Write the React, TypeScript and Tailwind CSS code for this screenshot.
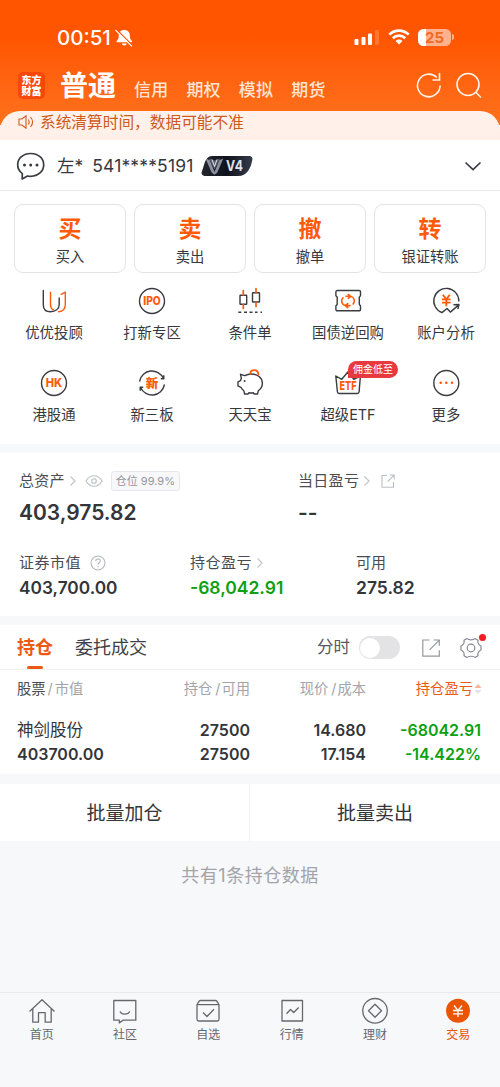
import type { ReactNode } from "react";
import clsx from "clsx";

const DARK = "#3a3c42";
const ORANGE = "#ff5a0a";

interface Shortcut {
  label: string;
  icon: ReactNode;
  badge?: string;
}

function Glyph({ children }: { children: ReactNode }) {
  return (
    <svg
      viewBox="0 0 28 28"
      className="h-7 w-7 shrink-0"
      fill="none"
      stroke={DARK}
      strokeWidth="1.4"
      strokeLinecap="round"
      strokeLinejoin="round"
    >
      {children}
    </svg>
  );
}

function GlyphText({ children, size, width, y }: { children: string; size: number; width: number; y: number }) {
  return (
    <text
      x="14"
      y={y}
      textAnchor="middle"
      textLength={width}
      lengthAdjust="spacingAndGlyphs"
      fontSize={size}
      fontWeight="800"
      fill={ORANGE}
      stroke="none"
    >
      {children}
    </text>
  );
}

const trades = [
  { mark: "买", label: "买入" },
  { mark: "卖", label: "卖出" },
  { mark: "撤", label: "撤单" },
  { mark: "转", label: "银证转账" },
];

const shortcuts: Shortcut[] = [
  {
    label: "优优投顾",
    icon: (
      <Glyph>
        <path d="M3.300 3.500v14.500c0 4.200 2.400 6.700 7.200 6.700 5 0 8.700-2.700 8.700-7.200V11" />
        <path d="M10.500 5.300v12.500c0 2.400 1 4.200 3 5.200M21.300 7.300l4-2.300v12.500c0 4.300-2.600 6.900-6.700 7.200" stroke={ORANGE} />
      </Glyph>
    ),
  },
  {
    label: "打新专区",
    icon: (
      <Glyph>
        <circle cx="14" cy="14" r="12.500" />
        <GlyphText size={11.5} width={17.5} y={18.2}>IPO</GlyphText>
      </Glyph>
    ),
  },
  {
    label: "条件单",
    icon: (
      <Glyph>
        <rect x="4" y="8.200" width="6.700" height="9" rx="0.500" />
        <rect x="16.500" y="5.800" width="7" height="9.200" rx="0.500" />
        <path d="M7.300 3.500v4.500M7.300 17.500v4M20 1.700v3.800M20 15.500v4" stroke={ORANGE} strokeWidth="1.700" />
        <path d="M2.300 25.200h3M8 25.200h3M13.500 25.200h3M19 25.200h2.500M24.500 25.200h1.500" strokeLinecap="butt" />
      </Glyph>
    ),
  },
  {
    label: "国债逆回购",
    icon: (
      <Glyph>
        <path d="M3.200 3.500h22a1.300 1.300 0 0 1 1.300 1.300v4l-1.200 1.300v7.400l1.200 1.300v3.700a1.300 1.300 0 0 1-1.300 1.300h-22a1.300 1.300 0 0 1-1.300-1.300v-3.700l1.300-1.300v-7.400L1.900 8.800v-4a1.300 1.300 0 0 1 1.300-1.300Z" />
        <path
          d="M12 9.300h3.500c3 0 4.800 2.300 4.800 4.400 0 1.400-.4 2.400-1.200 3.300M16 18.600h-3.500c-3 0-4.800-2.200-4.800-4.500 0-1.400.5-2.500 1.300-3.300M14.200 7.300l2.500 2-2.500 2M13.800 16.600l-2.500 2 2.500 2"
          stroke={ORANGE}
          strokeWidth="1.600"
        />
      </Glyph>
    ),
  },
  {
    label: "账户分析",
    icon: (
      <Glyph>
        <path d="M26.800 14A12.500 12.500 0 1 0 10 25.600l5-4.100 3.400 3.600 8.300-7.200M22 17.700l5-.2-1 4" />
        <path d="m10.800 7.700 3.500 4.500 3.500-4.500M10 12.300h8.600M10 15.600h8.600M14.300 12.300v7" stroke={ORANGE} strokeWidth="1.800" strokeLinecap="butt" />
      </Glyph>
    ),
  },
  {
    label: "港股通",
    icon: (
      <Glyph>
        <circle cx="14" cy="14" r="12.500" />
        <GlyphText size={12} width={16.5} y={18.3}>HK</GlyphText>
      </Glyph>
    ),
  },
  {
    label: "新三板",
    icon: (
      <Glyph>
        <path d="M1.700 12A12.500 12.500 0 0 1 25.300 9.200M26.300 16A12.500 12.500 0 0 1 2.700 18.800M25.800 6.800v3h-2.500M2.200 21.200v-3h2.500" />
        <GlyphText size={12.5} width={12.5} y={18.6}>新</GlyphText>
      </Glyph>
    ),
  },
  {
    label: "天天宝",
    icon: (
      <Glyph>
        <path d="M4.500 5.300l4.300 1.400C10.500 5.700 12.700 5 15.300 5c6 0 11.100 3.700 11.100 9.300 0 3.300-1.700 5.700-4.100 7.500l-.8 3.200h-3.300l-1-1.300c-1.400.3-2.900.3-4.200.1L12 25H8.600l-.8-3.300c-1.200-.9-2.200-2-2.900-3.400L2 16.800v-4l2.500-1.200c.2-.8.500-1.500.9-2.200Z" />
        <path d="M14.200 4.800c.2-2.300 1.900-3.600 4-3.600 2.400 0 4.100 1.800 4.200 4.500" stroke={ORANGE} strokeWidth="1.800" />
        <circle cx="8.600" cy="12" r="1" fill={DARK} stroke="none" />
      </Glyph>
    ),
  },
  {
    label: "超级ETF",
    badge: "佣金低至",
    icon: (
      <Glyph>
        <path d="m1.800 7 6 3.300 6-7.300 6 7.300L26.400 7l-1.300 15.800a1.800 1.800 0 0 1-1.800 1.700H5.200a1.800 1.800 0 0 1-1.800-1.700Z" />
        <GlyphText size={12} width={17} y={20.8}>ETF</GlyphText>
      </Glyph>
    ),
  },
  {
    label: "更多",
    icon: (
      <Glyph>
        <circle cx="14.300" cy="14" r="12.500" />
        <path d="M8.700 13.700h.01M14.300 13.700h.01M20 13.700h.01" stroke={ORANGE} strokeWidth="2.600" />
      </Glyph>
    ),
  },
];

const navItems: Shortcut[] = [
  { label: "首页", icon: <path d="M1.500 14.500 14 2.800l12.500 11.700M4.800 12v13.200h5.700v-9.500h6.700v9.500h6V12" /> },
  { label: "社区", icon: <path d="M2.800 3.500h22v19.700H12l-3.700 2.700v-2.700H2.800ZM9 14.500c1.500 3.500 8 3.500 9.800 0" /> },
  {
    label: "自选",
    icon: <path d="M3 7.700h22v14.500a1.800 1.800 0 0 1-1.800 1.800H4.800A1.800 1.800 0 0 1 3 22.200Zm0 0 2.200-3.500c.3-.5.700-.7 1.300-.7h15c.6 0 1 .2 1.300.7L25 7.700M9 15.500l4 4 7-7.200" />,
  },
  { label: "行情", icon: <path d="M4 3.500h20.500V24H4ZM8.500 16.800l4-4.300 3.200 3 5-5" /> },
  {
    label: "理财",
    icon: (
      <>
        <circle cx="14" cy="13.800" r="12.300" />
        <path d="m14 7.300 6.500 6.500-6.500 6.500-6.500-6.500Z" />
      </>
    ),
  },
  {
    label: "交易",
    icon: (
      <>
        <circle cx="14" cy="13.800" r="12" fill="#ea5504" stroke="none" />
        <path d="m10 8.500 4 5 4-5M9 13.500h10M9 16.800h10M14 13.500v6.500" stroke="#fff" />
      </>
    ),
  },
];

function Chevron({ className }: { className?: string }) {
  return (
    <svg viewBox="0 0 8 12" className={clsx("h-3 w-2", className)} fill="none" stroke="#c3c5cb" strokeWidth="1.200">
      <path d="m1.500 1.500 4.500 4.500-4.500 4.500" />
    </svg>
  );
}

function StatusBar() {
  return (
    <div className="flex h-[66px] items-start justify-between pt-[26px] pr-[46px] pl-[57px]">
      <div className="flex items-center">
        <span className="w-[56px] text-[20.5px] leading-[23px] font-medium">00:51</span>
        <svg viewBox="0 0 18 18" className="ml-0.5 h-[18px] w-[18px]" fill="currentColor">
          <path d="M9.300 1c-3.800 0-5.600 2.500-5.600 5.700 0 3-.7 4-2 5.200-.5.500-.3 1.300.5 1.300h14.200c.8 0 1-.8.5-1.300-1.300-1.200-2-2.200-2-5.200C14.900 3.500 13.100 1 9.300 1ZM6.800 14.500c.3 1.300 1.200 2 2.500 2s2.200-.7 2.500-2Z" />
          <path d="m1.800 .8 15.500 15.500" stroke="#ff5a05" strokeWidth="1.300" />
          <path d="m.8 1.300 15.900 15.900" stroke="currentColor" strokeWidth="1.200" strokeLinecap="round" />
        </svg>
      </div>
      <div className="flex h-[22px] items-center">
        <svg viewBox="0 0 26 16" className="h-4 w-[26px]" fill="currentColor">
          <rect x="0.500" y="10" width="4" height="6" rx="1" />
          <rect x="7.500" y="8" width="4" height="8" rx="1" />
          <rect x="14" y="4.500" width="4" height="11.500" rx="1" />
          <rect x="21" y="1" width="4" height="15" rx="1" opacity="0.200" />
        </svg>
        <svg viewBox="0 0 22 16" className="ml-2 h-4 w-[22px]" fill="none" stroke="currentColor" strokeWidth="2.700">
          <path d="M1.300 5.600a14 14 0 0 1 19.400 0M4.800 9.200a9 9 0 0 1 12.400 0" />
          <path d="M11 15.500 7.500 12a5 5 0 0 1 7 0Z" fill="currentColor" stroke="none" />
        </svg>
        <div className="ml-2 flex h-[17px] w-[33px] items-center justify-center rounded-[5.500px] bg-linear-to-r from-white from-25% to-[#ffb28d] to-25% text-[15px] leading-[17px] font-bold text-[#f26a20]">
          25
        </div>
        <div className="ml-px h-[6px] w-[2px] rounded-r-full bg-[#ffb28d]" />
      </div>
    </div>
  );
}

function Header() {
  return (
    <header className="h-[125px] shrink-0 bg-linear-to-b from-[#ff5500] from-30% to-[#ff711c] text-white">
      <StatusBar />
      <div className="flex h-[45px] items-center pr-[18px] pl-[18px]">
        <div className="mt-[-7px] flex h-[27px] w-[27px] flex-col items-center justify-center rounded-[5px] bg-[#f8470b] font-['Noto_Sans_CJK_SC'] text-[10px] leading-[11px] font-black">
          <span className="whitespace-pre">{"东方\n财富"}</span>
        </div>
        <span className="mt-[-5px] ml-[15px] text-[28px] leading-10 font-bold">普通</span>
        <nav className="mt-0.5 ml-[18px] flex gap-[18px] text-[17px] leading-6 font-medium tracking-[0.2px] text-[#ffe3d3]">
          <span>信用</span>
          <span>期权</span>
          <span>模拟</span>
          <span>期货</span>
        </nav>
        <svg viewBox="0 0 66 26" className="mt-[-7px] ml-auto h-[26px] w-[66px]" fill="none" stroke="#fff4ec" strokeWidth="1.600">
          <path d="M24.100 13.500a11.300 11.300 0 1 1-3.300-8M23.500 1v7h-7" />
          <circle cx="52" cy="12.500" r="11" />
          <path d="m60 20.500 4.500 4.500" strokeLinecap="round" />
        </svg>
      </div>
    </header>
  );
}

function AccountRow() {
  return (
    <div className="flex h-[51px] items-center border-b border-[#e9e9eb] pt-px pr-[18px] pl-4">
      <svg viewBox="0 0 30 28" className="h-7 w-[30px]" fill="none" stroke={DARK} strokeWidth="1.700" strokeLinejoin="round">
        <path d="M14.700 1.500C7.300 1.500 1.700 6.300 1.700 12.800c0 3.600 1.800 6.700 4.600 8.800l-.1 5.400 5.300-3c1 .2 2.100.3 3.200.3 7.400 0 13-5 13-11.500s-5.600-11.300-13-11.300Z" />
        <path d="M8.500 13h.01M14.700 13h.01M21 13h.01" strokeWidth="3" strokeLinecap="round" />
      </svg>
      <span className="mt-px ml-[11px] text-[17.500px] leading-6 text-[#36383d]">左*</span>
      <span className="mt-px ml-[9px] w-[109px] text-[17.500px] leading-6 tracking-[0.150px] text-[#36383d]">541****5191</span>
      <svg viewBox="0 0 52 22" className="h-[22px] w-[52px]">
        <defs>
          <linearGradient id="vip" x1="0" x2="1">
            <stop offset="0" stopColor="#24262d" />
            <stop offset="0.500" stopColor="#10131d" />
            <stop offset="1" stopColor="#363c4b" />
          </linearGradient>
        </defs>
        <path d="M11 1h37c2.500 0 4 1.600 3.300 4-1.500 8-5 16-14.300 16H4.500C2 21 0 19.400.7 17L3 10C4.500 4 7.500 1 11 1Z" fill="url(#vip)" />
        <path d="m4.500 3.500 4.300 1.700L13.500 17l4.800-11.800 4-1.700-6 14-2.800 2.300-2.900-2.300Z" fill="#8b90a0" />
        <path d="m8 3.500 5.500 2 5.500-2-5.500 11Z" fill="#5c6070" />
        <path d="m11 4.500 2.500 7 2.500-7" fill="none" stroke="#dfe1e9" />
        <text x="33.500" y="16" textAnchor="middle" fontSize="14" fontWeight="700" fill="#dfe2ed" textLength="17" lengthAdjust="spacingAndGlyphs">
          V4
        </text>
      </svg>
      <svg viewBox="0 0 18 10" className="ml-auto h-2.5 w-[18px]" fill="none" stroke={DARK} strokeWidth="1.700">
        <path d="m1.500 1.500 7.500 7 7.500-7" />
      </svg>
    </div>
  );
}

function AssetSummary() {
  return (
    <section className="h-[163px] bg-white pt-[17px] pl-[19px]">
      <div className="flex">
        <div className="w-[279px]">
          <div className="flex h-[22px] items-center text-[15px] tracking-[0.3px] text-[#4a4c52]">
            总资产
            <Chevron className="ml-1" />
            <svg viewBox="0 0 18 12" className="ml-2 h-3 w-[18px]" fill="none" stroke="#bcbec5" strokeWidth="1.100">
              <path d="M1 6c4-7 12-7 16 0-4 7-12 7-16 0Z" />
              <circle cx="9" cy="6" r="2.300" />
            </svg>
            <span className="ml-[8px] flex h-5 w-[69px] items-center justify-center gap-[3px] rounded-[3px] border border-[#e7e8ec] bg-[#f8f8fa] text-[11px] tracking-normal text-[#93959c]">
              仓位 <span>99.9%</span>
            </span>
          </div>
          <div className="mt-[7px] text-[21px] leading-7 font-semibold text-[#333539]">403,975.82</div>
        </div>
        <div>
          <div className="flex h-[22px] items-center text-[15px] tracking-[0.3px] text-[#4a4c52]">
            当日盈亏
            <Chevron className="ml-1" />
            <svg viewBox="0 0 14 14" className="ml-2.5 h-[14px] w-[14px]" fill="none" stroke="#bcbec5" strokeWidth="1.100">
              <path d="M6 1.500H1v11.700h11.500V8M8.700 1h4.500v4.500M13 1.200 6.500 7.700" />
            </svg>
          </div>
          <div className="mt-[7px] text-[21px] leading-7 font-semibold text-[#333539]">--</div>
        </div>
      </div>
      <div className="mt-[25px] flex">
        <div className="w-[171px]">
          <div className="flex h-[22px] items-center text-[15px] tracking-[0.5px] text-[#4a4c52]">
            证券市值
            <svg viewBox="0 0 16 16" className="ml-[9px] h-4 w-4" fill="none" stroke="#b5b7be" strokeWidth="1.100">
              <circle cx="8" cy="8" r="7" />
              <path d="M5.800 6.300c0-3 4.500-3 4.500-.2 0 1.700-2.200 1.700-2.200 3.500M8.100 11v1.200" />
            </svg>
          </div>
          <div className="mt-[2px] text-[17.300px] leading-6 font-semibold text-[#333539]">403,700.00</div>
        </div>
        <div className="w-[166px]">
          <div className="flex h-[22px] items-center text-[15px] tracking-[0.500px] text-[#4a4c52]">
            持仓盈亏
            <Chevron className="ml-1" />
          </div>
          <div className="mt-[2px] text-[17.500px] leading-6 font-semibold text-[#0e9f12]">-68,042.91</div>
        </div>
        <div>
          <div className="flex h-[22px] items-center text-[15px] text-[#4a4c52]">可用</div>
          <div className="mt-[2px] text-[17.500px] leading-6 font-semibold text-[#333539]">275.82</div>
        </div>
      </div>
    </section>
  );
}

function Holdings() {
  return (
    <section className="h-[149px] bg-white">
      <div className="flex h-[45px] items-center border-b border-[#f0f1f3] pt-px pr-[18px] pl-[17px] text-[18px] text-[#3f4146]">
        <div className="relative flex h-full items-center font-bold text-[#ea5a14]">
          持仓
          <span className="absolute bottom-0 left-[10px] h-[3px] w-4 rounded-full bg-[#ea5a14]" />
        </div>
        <span className="ml-[22px]">委托成交</span>
        <span className="ml-auto text-[16.500px] text-[#57595f]">分时</span>
        <span className="ml-[9px] flex h-[23px] w-[41px] items-center rounded-full bg-[#e3e3e5] px-px">
          <span className="h-[20px] w-[20px] rounded-full bg-white" />
        </span>
        <svg viewBox="0 0 18 18" className="ml-[22px] h-[18px] w-[18px]" fill="none" stroke="#96989e" strokeWidth="1.200">
          <path d="M7.500 1H.8v16.200h16.500v-6M11.500 1h5.800v5.800M17 1.300 7.500 10.800" />
        </svg>
        <div className="relative ml-[20px]">
          <svg viewBox="0 0 22 22" className="h-[22px] w-[22px]" fill="none" stroke="#86888e" strokeWidth="1.200" strokeLinejoin="round">
            <path d="M7 1.500c1.300 1.700 6.700 1.700 8 0l3 1.800c-.8 2.200 1 5 3 5.700v4c-2 .7-3.800 3.500-3 5.700l-3 1.800c-1.300-1.700-6.700-1.700-8 0l-3-1.800C4.800 16.500 3 13.700 1 13V9c2-.7 3.800-3.500 3-5.700Z" />
            <circle cx="11" cy="11" r="3.800" />
          </svg>
          <span className="absolute -top-[3px] -right-[4px] h-[7px] w-[7px] rounded-full bg-[#ee1c25]" />
        </div>
      </div>
      <div className="grid h-[37px] grid-cols-[133px_100px_116px_116px] items-center px-[17px] pt-px text-right text-[14.300px] text-[#a2a4a9]">
        <span className="text-left">
          <span className="text-[#4a4c52]">股票</span>
          <span className="mx-[2px]">/</span>市值
        </span>
        <span>
          持仓<span className="mr-[1px] ml-[3px]">/</span>可用
        </span>
        <span>
          现价<span className="mr-[1px] ml-[3px]">/</span>成本
        </span>
        <span className="flex items-center justify-end text-[#ea5a14]">
          持仓盈亏
          <svg viewBox="0 0 8 12" className="ml-px h-3 w-2">
            <path d="m4 1 3.500 4h-7Z" fill="#f7b493" />
            <path d="m4 11 3.500-4h-7Z" fill="#e2e3e6" />
          </svg>
        </span>
      </div>
      <div className="grid grid-cols-[133px_100px_116px_115px] px-[17px] pt-[11px] text-right text-[16px] leading-6 font-semibold text-[#333539]">
        <span className="text-left text-[16.500px] font-normal">神剑股份</span>
        <span>27500</span>
        <span>14.680</span>
        <span className="text-[#0e9f12]">-68042.91</span>
        <span className="text-left">403700.00</span>
        <span>27500</span>
        <span>17.154</span>
        <span className="text-[#0e9f12]">-14.422%</span>
      </div>
    </section>
  );
}

export default function App() {
  return (
    <div className="flex h-[1087px] w-[500px] flex-col overflow-hidden bg-[#f7f8fa] font-['Inter','Noto_Sans_CJK_SC',sans-serif]">
      <Header />

      <div className="relative -mt-[14px] flex h-[29px] shrink-0 items-start rounded-t-[20px] bg-linear-to-b from-[#fff2ea] to-[#ffefe8] pl-[18px] text-[#cf5a1d]">
        <svg viewBox="0 0 16 14" className="mt-1 h-3.5 w-4" fill="none" stroke="currentColor" strokeWidth="1.100">
          <path d="M1 4h3l4-3.200v12.400L4 10H1ZM10.300 4.500c1 1.500 1 3.500 0 5M12.500 2c2.500 3 2.500 7 0 10" />
        </svg>
        <span className="mt-px ml-1.5 text-[15.700px] leading-[21px]">系统清算时间，数据可能不准</span>
      </div>

      <section className="h-[304px] shrink-0 bg-white">
        <AccountRow />
        <div className="grid grid-cols-4 gap-2 px-3.5 pt-[13px]">
          {trades.map((trade) => (
            <div key={trade.label} className="flex h-[69px] flex-col items-center rounded-[9px] border border-[#e2e3e5] pt-[9px]">
              <span className="text-[23px] leading-[30px] font-bold text-[#ff5a0a]">{trade.mark}</span>
              <span className="mt-[3px] text-[14.300px] leading-5 text-[#36383d]">{trade.label}</span>
            </div>
          ))}
        </div>
        <div className="grid grid-cols-5 gap-y-[26px] px-[5px] pt-[14px]">
          {shortcuts.map((item) => (
            <div key={item.label} className="relative flex h-[56px] flex-col items-center">
              {item.icon}
              <span className="mt-[8px] text-[14.400px] leading-5 whitespace-nowrap text-[#36383d]">{item.label}</span>
              {item.badge && (
                <span className="absolute -top-2 left-[49px] flex h-[17px] w-[50px] items-center justify-center rounded-full rounded-bl-[3px] bg-[#e8393f] text-[10px] text-white">
                  {item.badge}
                </span>
              )}
            </div>
          ))}
        </div>
      </section>

      <div className="flex flex-col pt-[9px]">
        <AssetSummary />
      </div>
      <div className="flex flex-col pt-[9px]">
        <Holdings />
      </div>

      <div className="mt-[10px] grid h-[57px] shrink-0 grid-cols-2 bg-white text-[19px] text-[#333539]">
        <span className="flex items-center justify-center border-r border-[#f1f2f4] pt-[3px]">批量加仓</span>
        <span className="flex items-center justify-center pt-[3px]">批量卖出</span>
      </div>
      <p className="mt-[23px] text-center text-[18px] leading-6 tracking-[0.500px] text-[#a2a4a9]">共有1条持仓数据</p>

      <nav className="mt-auto grid h-[95px] shrink-0 grid-cols-6 border-t border-[#e8e9ec] pt-1">
        {navItems.map((item) => (
          <div
            key={item.label}
            className={clsx("flex flex-col items-center text-[12px]", item.label === "交易" ? "text-[#ea5504]" : "text-[#66686e]")}
          >
            <svg viewBox="0 0 28 28" className="h-7 w-7" fill="none" stroke="currentColor" strokeWidth="1.300" strokeLinejoin="round">
              {item.icon}
            </svg>
            <span className="mt-px leading-[17px]">{item.label}</span>
          </div>
        ))}
      </nav>
    </div>
  );
}
